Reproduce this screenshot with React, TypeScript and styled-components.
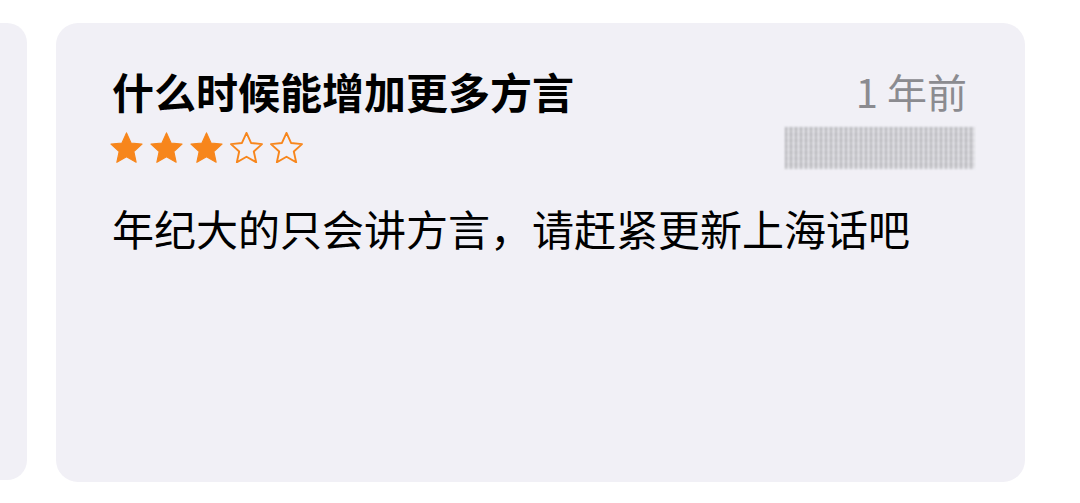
import React, { FC } from "react";
import styled, { createGlobalStyle } from "styled-components";

const GlobalStyle = createGlobalStyle`
  html, body {
    margin: 0;
    padding: 0;
    background: #ffffff;
  }
  body {
    font-family: "Noto Sans CJK SC", "Noto Sans", sans-serif;
  }
`;

const Page = styled.div`
  width: 1080px;
  height: 503px;
  padding-top: 23px;
  box-sizing: border-box;
  display: flex;
  gap: 29px;
  overflow: hidden;
`;

const SideCard = styled.div`
  flex: 0 0 27px;
  height: 457px;
  background: #f1f0f6;
  border-radius: 0 20px 20px 0;
`;

const Card = styled.div`
  flex: 0 0 969px;
  height: 459px;
  background: #f1f0f6;
  border-radius: 22px;
  box-sizing: border-box;
  padding: 40px 57px 0 56px;
  display: flex;
  flex-direction: column;
`;

const Header = styled.div`
  display: flex;
  justify-content: space-between;
  align-items: flex-start;
`;

const Title = styled.div`
  font-size: 42px;
  font-weight: 700;
  color: #000;
  line-height: 56px;
`;

const Meta = styled.div`
  display: flex;
  flex-direction: column;
  align-items: flex-end;
`;

const When = styled.div`
  font-size: 40px;
  color: #8b8b90;
  line-height: 56px;
  margin-right: 1px;
`;

const Author = styled.div`
  width: 190px;
  height: 42px;
  margin-top: 8px;
  margin-right: -7px;
  background:
    repeating-linear-gradient(90deg, rgba(120,120,125,0.55) 0 2px, rgba(230,230,235,0.4) 2px 5px),
    repeating-linear-gradient(0deg, rgba(255,255,255,0.35) 0 3px, transparent 3px 6px),
    #c9c9cd;
  filter: blur(0.8px);
  opacity: 0.75;
`;

const Stars = styled.div`
  display: flex;
  gap: 7px;
  margin-top: -37px;
  margin-left: -2px;
`;

const Body = styled.div`
  margin-top: 37px;
  font-size: 42px;
  color: #000;
  line-height: 56px;
`;

const StarIcon: FC<{ filled: boolean }> = ({ filled }) => (
  <svg width="33" height="31" viewBox="0.8 0.6 22.4 21.2">
    <path
      d="M12 1.2l3.1 6.9 7.5.8-5.6 5 1.6 7.4L12 17.5l-6.6 3.8L7 13.9l-5.6-5 7.5-.8z"
      fill={filled ? "#f7861c" : "none"}
      stroke="#f7861c"
      strokeWidth={filled ? 0.8 : 1.3}
      strokeLinejoin="round"
    />
  </svg>
);

const App: FC = () => {
  const rating = 3;
  return (
    <>
      <GlobalStyle />
      <Page>
        <SideCard />
        <Card>
          <Header>
            <div>
              <Title>什么时候能增加更多方言</Title>
            </div>
            <Meta>
              <When>1 年前</When>
              <Author />
            </Meta>
          </Header>
          <Stars>
            {[0, 1, 2, 3, 4].map((i) => (
              <StarIcon key={i} filled={i < rating} />
            ))}
          </Stars>
          <Body>年纪大的只会讲方言，请赶紧更新上海话吧</Body>
        </Card>
      </Page>
    </>
  );
};

export default App;
